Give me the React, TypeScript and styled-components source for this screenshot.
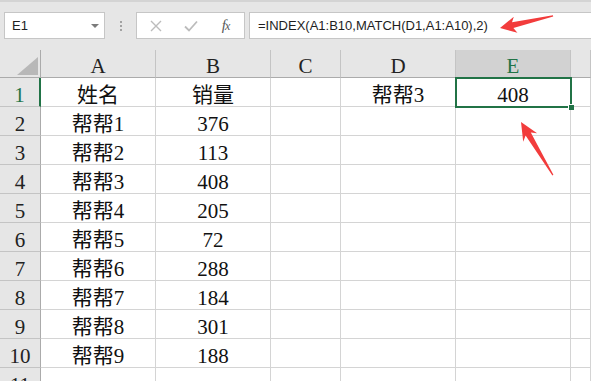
import styled, { createGlobalStyle } from "styled-components"

const GlobalStyle = createGlobalStyle`
  html, body {
    margin: 0;
    padding: 0;
  }
  body {
    background: #e6e6e6;
    overflow: hidden;
  }
`

const GREEN = "#217346"
const columns = ["A", "B", "C", "D", "E", ""]

type Row = { cells: string[] }

const rows: Row[] = [
  { cells: ["姓名", "销量", "", "帮帮3", "408", ""] },
  { cells: ["帮帮1", "376", "", "", "", ""] },
  { cells: ["帮帮2", "113", "", "", "", ""] },
  { cells: ["帮帮3", "408", "", "", "", ""] },
  { cells: ["帮帮4", "205", "", "", "", ""] },
  { cells: ["帮帮5", "72", "", "", "", ""] },
  { cells: ["帮帮6", "288", "", "", "", ""] },
  { cells: ["帮帮7", "184", "", "", "", ""] },
  { cells: ["帮帮8", "301", "", "", "", ""] },
  { cells: ["帮帮9", "188", "", "", "", ""] },
  { cells: ["", "", "", "", "", ""] },
]

const App = () => {
  return (
    <Window>
      <GlobalStyle />
      <Toolbar>
        <NameBox>
          <span>E1</span>
          <Caret />
        </NameBox>
        <Grip>
          <Dot />
          <Dot />
          <Dot />
        </Grip>
        <FuncButtons>
          <FuncButton>
            <svg width="12" height="12" viewBox="0 0 12 12">
              <path d="M1 1 L11 11 M11 1 L1 11" stroke="#bcbcbc" strokeWidth="1.4" />
            </svg>
          </FuncButton>
          <FuncButton>
            <svg width="14" height="12" viewBox="0 0 14 12">
              <path d="M1 6.5 L5 10.5 L13 1.5" stroke="#bcbcbc" strokeWidth="1.8" fill="none" />
            </svg>
          </FuncButton>
          <FuncButton>
            <Fx>
              f<small>x</small>
            </Fx>
          </FuncButton>
        </FuncButtons>
        <FormulaInput>=INDEX(A1:B10,MATCH(D1,A1:A10),2)</FormulaInput>
      </Toolbar>

      <Sheet>
        <Corner>
          <svg width="40" height="27" viewBox="0 0 40 27">
            <polygon points="17,25 38,25 38,7" fill="#b8b8b8" />
          </svg>
        </Corner>
        {columns.map((c, i) => (
          <ColHeader key={i} $active={c === "E"}>
            {c}
          </ColHeader>
        ))}
        {rows.map((row, r) => (
          <RowGroup key={r}>
            <RowHeader $active={r === 0}>{r + 1}</RowHeader>
            {row.cells.map((text, c) => (
              <Cell key={c} $selected={r === 0 && c === 4}>
                {text}
              </Cell>
            ))}
          </RowGroup>
        ))}
      </Sheet>

      <Annotations width="591" height="381" viewBox="0 0 591 381">
        <polygon
          points="500,28 513.8,16.7 512,22.2 552.9,15.3 553.2,16.6 513.4,28 517.4,32.8"
          fill="#f23c3c"
        />
        <polygon
          points="521,122 537.1,133.3 530.8,132.5 553.4,174.7 552.4,175.4 525.6,135.5 523.2,141.8"
          fill="#f23c3c"
        />
      </Annotations>
    </Window>
  )
}

const Window = styled.div`
  position: relative;
  width: 591px;
  height: 381px;
  overflow: hidden;
  background: #e6e6e6;
  font-family: "Liberation Sans", Arial, sans-serif;
`

const Toolbar = styled.div`
  display: flex;
  align-items: flex-start;
  height: 50px;
  box-sizing: border-box;
  border-top: 2px solid #d4d4d4;
  padding: 10px 0 0 4px;
`

const NameBox = styled.div`
  display: flex;
  align-items: center;
  justify-content: space-between;
  width: 101px;
  height: 27px;
  box-sizing: border-box;
  padding: 0 5px 0 7px;
  background: #fff;
  border: 1px solid #c6c6c6;
  font-size: 13px;
  color: #222;
`

const Caret = styled.span`
  width: 0;
  height: 0;
  border-left: 4px solid transparent;
  border-right: 4px solid transparent;
  border-top: 4px solid #7b7b7b;
  margin-top: 1px;
`

const Grip = styled.div`
  display: flex;
  flex-direction: column;
  align-items: center;
  justify-content: center;
  gap: 2px;
  width: 31px;
  height: 27px;
`

const Dot = styled.span`
  width: 2px;
  height: 2px;
  background: #a2a2a2;
`

const FuncButtons = styled.div`
  display: flex;
  align-items: center;
  width: 109px;
  height: 27px;
  box-sizing: border-box;
  padding-left: 1px;
  background: #fff;
  border: 1px solid #c6c6c6;
`

const FuncButton = styled.div`
  display: flex;
  align-items: center;
  justify-content: center;
  width: 35px;
  height: 25px;
`

const Fx = styled.span`
  font-family: "Liberation Serif", serif;
  font-style: italic;
  font-size: 15px;
  color: #595959;
  letter-spacing: -1px;

  small {
    font-size: 12px;
  }
`

const FormulaInput = styled.div`
  flex: 1;
  height: 27px;
  box-sizing: border-box;
  margin-left: 4px;
  padding-left: 8px;
  background: #fff;
  border: 1px solid #c6c6c6;
  border-right: none;
  font-size: 13px;
  line-height: 25px;
  color: #1e1e1e;
  white-space: nowrap;
`

const Sheet = styled.div`
  display: grid;
  grid-template-columns: 41px 115px 115px 70px 115px 115px 1fr;
  grid-template-rows: 28px;
  grid-auto-rows: 29px;
  font-family: "Liberation Serif", "Noto Sans CJK SC", serif;
  font-size: 21px;
  line-height: 24px;
  color: #111;
`

const RowGroup = styled.div`
  display: contents;
`

const HeaderBase = styled.div`
  box-sizing: border-box;
  background: #e6e6e6;
  text-align: center;
  color: #222;
`

const Corner = styled(HeaderBase)`
  border-right: 1px solid #ababab;
  border-bottom: 1px solid #ababab;

  svg {
    display: block;
  }
`

const ColHeader = styled(HeaderBase)<{ $active: boolean }>`
  padding-top: 4px;
  border-right: 1px solid #c4c4c4;
  border-bottom: 1px solid #ababab;
  background: ${({ $active }) => ($active ? "#d2d2d2" : "#e6e6e6")};
  color: ${({ $active }) => ($active ? GREEN : "#222")};
`

const RowHeader = styled(HeaderBase)<{ $active: boolean }>`
  padding-top: 5px;
  border-bottom: 1px solid #c4c4c4;
  border-right: ${({ $active }) => ($active ? `2px solid ${GREEN}` : "1px solid #ababab")};
  color: ${({ $active }) => ($active ? GREEN : "#222")};
`

const Cell = styled.div<{ $selected: boolean }>`
  position: relative;
  box-sizing: border-box;
  padding-top: 5px;
  background: #fff;
  border-right: 1px solid #d4d4d4;
  border-bottom: 1px solid #d4d4d4;
  text-align: center;
  white-space: nowrap;

  ${({ $selected }) =>
    $selected &&
    `
    &::before {
      content: "";
      position: absolute;
      top: -1px;
      left: -1px;
      right: -2px;
      bottom: -2px;
      border: 2px solid ${GREEN};
      z-index: 1;
    }
    &::after {
      content: "";
      position: absolute;
      right: -4px;
      bottom: -4px;
      width: 5px;
      height: 5px;
      background: ${GREEN};
      border-left: 1px solid #fff;
      border-top: 1px solid #fff;
      z-index: 2;
    }
  `}
`

const Annotations = styled.svg`
  position: absolute;
  top: 0;
  left: 0;
  pointer-events: none;
  z-index: 3;
`

export default App
